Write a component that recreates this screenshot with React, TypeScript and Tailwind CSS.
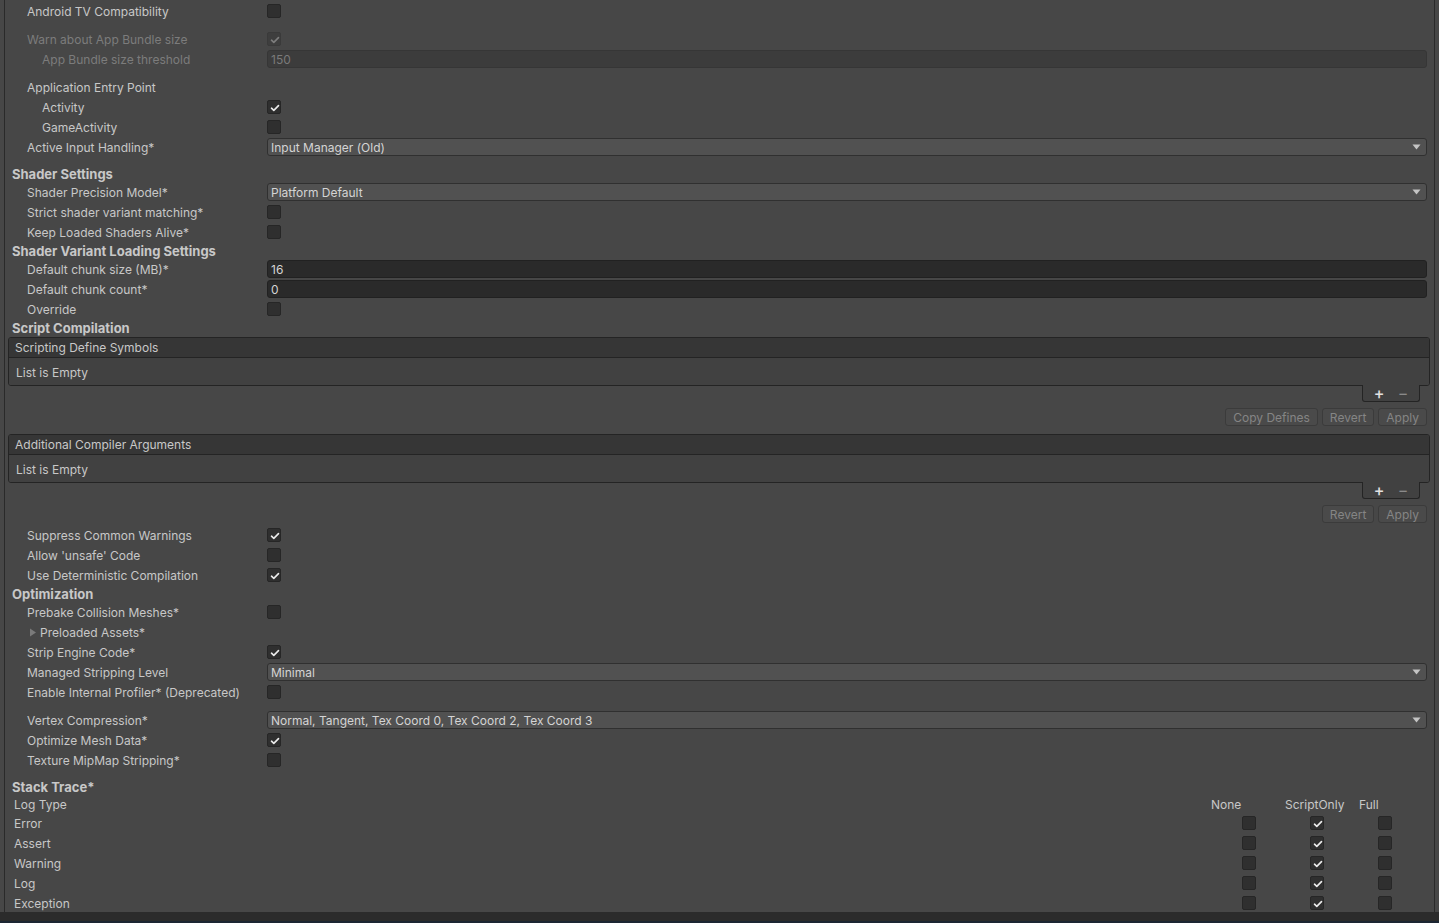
import React from 'react';

type Indent = 0 | 1 | 2;

const indentClass: Record<Indent, string> = {
  0: 'pl-[7px]',
  1: 'pl-[22px]',
  2: 'pl-[37px]',
};

const Check: React.FC<{ dim?: boolean }> = ({ dim }) => (
  <svg width="14" height="14" viewBox="0 0 14 14" className="block">
    <polyline
      points="3.5,7.2 5.8,9.4 10.5,4.6"
      fill="none"
      stroke={dim ? '#7d7d7d' : '#ececec'}
      strokeWidth="1.6"
      strokeLinecap="round"
      strokeLinejoin="round"
    />
  </svg>
);

const Checkbox: React.FC<{ checked?: boolean; disabled?: boolean }> = ({ checked, disabled }) => (
  <div
    className={`w-[14px] h-[14px] rounded-[2px] border shrink-0 ${
      disabled ? 'bg-[#3e3e3e] border-[#3a3a3a]' : 'bg-[#2f2f2f] border-[#262626]'
    }`}
  >
    {checked && <Check dim={disabled} />}
  </div>
);

const Row: React.FC<{
  label: React.ReactNode;
  indent?: Indent;
  disabled?: boolean;
  className?: string;
  children?: React.ReactNode;
}> = ({ label, indent = 1, disabled, className = '', children }) => (
  <div className={`h-[20px] flex items-center ${className}`}>
    <div
      className={`w-[262px] shrink-0 whitespace-nowrap pt-[2px] ${indentClass[indent]} ${
        disabled ? 'text-[#7c7c7c]' : 'text-[#c8c8c8]'
      }`}
    >
      {label}
    </div>
    <div className="flex-1 flex items-center pr-[7px]">{children}</div>
  </div>
);

const Header: React.FC<{ children: React.ReactNode; className?: string }> = ({ children, className = '' }) => (
  <div className={`h-[18px] flex items-center pt-[2px] pl-[7px] font-bold text-[13px] text-[#c8c8c8] ${className}`}>
    {children}
  </div>
);

const Dropdown: React.FC<{ value: string }> = ({ value }) => (
  <div className="flex-1 h-[18px] rounded-[3px] bg-[#515151] border border-[#303030] flex items-center pl-[3px] pr-[5px] text-[#d4d4d4]">
    <span className="flex-1 pt-[2px]">{value}</span>
    <svg width="9" height="6" viewBox="0 0 9 6">
      <polygon points="0.5,0.5 8.5,0.5 4.5,5.5" fill="#c4c4c4" />
    </svg>
  </div>
);

const TextField: React.FC<{ value: string; disabled?: boolean }> = ({ value, disabled }) => (
  <div
    className={`flex-1 h-[18px] rounded-[3px] border flex items-center pt-[2px] pl-[3px] ${
      disabled
        ? 'bg-[#3c3c3c] border-[#363636] text-[#7a7a7a]'
        : 'bg-[#2a2a2a] border-[#212121] text-[#d4d4d4]'
    }`}
  >
    {value}
  </div>
);

const SmallButton: React.FC<{ children: React.ReactNode }> = ({ children }) => (
  <div className="h-[18px] px-[7px] pt-[2px] rounded-[3px] bg-[#4a4a4a] border border-[#3b3b3b] flex items-center text-[#858585]">
    {children}
  </div>
);

const ListBox: React.FC<{ title: string; buttons: string[] }> = ({ title, buttons }) => (
  <div className="pl-[3px] pr-[4px]">
    <div className="rounded-[3px] border border-[#242424] overflow-hidden">
      <div className="h-[20px] bg-[#363636] border-b border-[#242424] flex items-center pl-[6px] text-[#c8c8c8]">
        {title}
      </div>
      <div className="h-[27px] bg-[#414141] flex items-center pt-[2px] pl-[7px] text-[#c8c8c8]">List is Empty</div>
    </div>
    <div className="flex justify-end pr-[10px]">
      <div className="w-[58px] h-[17px] -mt-[1px] bg-[#414141] border border-t-0 border-[#242424] rounded-b-[3px] flex items-center justify-around px-[4px]">
        <span className="text-[#e2e2e2] text-[16px] leading-none font-medium">+</span>
        <span className="text-[#8a8a8a] text-[16px] leading-none">−</span>
      </div>
    </div>
    <div className="flex justify-end gap-[4px] pr-[3px] mt-[6px]">
      {buttons.map((b) => (
        <SmallButton key={b}>{b}</SmallButton>
      ))}
    </div>
  </div>
);

const stackRows = ['Error', 'Assert', 'Warning', 'Log', 'Exception'];

export default function App() {
  return (
    <div
      className="w-full h-[923px] bg-[#474747] overflow-hidden flex flex-col text-[12px] leading-none"
      style={{ fontFamily: 'Inter, "Noto Sans", sans-serif' }}
    >
      <div className="flex-1 mx-[4px] border-l border-r border-[#2a2a2a] pt-[1px] min-h-0">
        <Row label="Android TV Compatibility">
          <Checkbox />
        </Row>
        <Row label="Warn about App Bundle size" disabled className="mt-[8px]">
          <Checkbox checked disabled />
        </Row>
        <Row label="App Bundle size threshold" indent={2} disabled>
          <TextField value="150" disabled />
        </Row>
        <Row label="Application Entry Point" className="mt-[8px]" />
        <Row label="Activity" indent={2}>
          <Checkbox checked />
        </Row>
        <Row label="GameActivity" indent={2}>
          <Checkbox />
        </Row>
        <Row label="Active Input Handling*">
          <Dropdown value="Input Manager (Old)" />
        </Row>

        <Header className="mt-[7px]">Shader Settings</Header>
        <Row label="Shader Precision Model*">
          <Dropdown value="Platform Default" />
        </Row>
        <Row label="Strict shader variant matching*">
          <Checkbox />
        </Row>
        <Row label="Keep Loaded Shaders Alive*">
          <Checkbox />
        </Row>
        <Header className="-mt-[1px]">Shader Variant Loading Settings</Header>
        <Row label="Default chunk size (MB)*">
          <TextField value="16" />
        </Row>
        <Row label="Default chunk count*">
          <TextField value="0" />
        </Row>
        <Row label="Override">
          <Checkbox />
        </Row>
        <Header className="-mt-[1px]">Script Compilation</Header>

        <div className="mt-[1px]">
          <ListBox title="Scripting Define Symbols" buttons={['Copy Defines', 'Revert', 'Apply']} />
        </div>
        <div className="mt-[8px]">
          <ListBox title="Additional Compiler Arguments" buttons={['Revert', 'Apply']} />
        </div>

        <Row label="Suppress Common Warnings" className="mt-[2px]">
          <Checkbox checked />
        </Row>
        <Row label="Allow 'unsafe' Code">
          <Checkbox />
        </Row>
        <Row label="Use Deterministic Compilation">
          <Checkbox checked />
        </Row>
        <Header className="-mt-[1px]">Optimization</Header>
        <Row label="Prebake Collision Meshes*">
          <Checkbox />
        </Row>
        <Row
          label={
            <span className="flex items-center">
              <svg width="8" height="9" viewBox="0 0 8 9" className="ml-[2px] mr-[3px] -mt-[2px]">
                <polygon points="1,0.5 7,4.5 1,8.5" fill="#7a7a7a" />
              </svg>
              Preloaded Assets*
            </span>
          }
        />
        <Row label="Strip Engine Code*">
          <Checkbox checked />
        </Row>
        <Row label="Managed Stripping Level">
          <Dropdown value="Minimal" />
        </Row>
        <Row label="Enable Internal Profiler* (Deprecated)">
          <Checkbox />
        </Row>
        <Row label="Vertex Compression*" className="mt-[8px]">
          <Dropdown value="Normal, Tangent, Tex Coord 0, Tex Coord 2, Tex Coord 3" />
        </Row>
        <Row label="Optimize Mesh Data*">
          <Checkbox checked />
        </Row>
        <Row label="Texture MipMap Stripping*">
          <Checkbox />
        </Row>

        <Header className="mt-[7px]">Stack Trace*</Header>
        <div className="h-[18px] flex items-center pt-[2px] text-[#c8c8c8]">
          <div className="flex-1 pl-[9px]">Log Type</div>
          <div className="w-[74px]">None</div>
          <div className="w-[74px]">ScriptOnly</div>
          <div className="w-[74px]">Full</div>
          <div className="w-[1px]" />
        </div>
        {stackRows.map((r) => (
          <div key={r} className="h-[20px] flex items-center text-[#c8c8c8]">
            <div className="flex-1 pl-[9px] pt-[2px]">{r}</div>
            <div className="w-[68px] flex justify-center">
              <Checkbox />
            </div>
            <div className="w-[68px] flex justify-center">
              <Checkbox checked />
            </div>
            <div className="w-[68px] flex justify-center">
              <Checkbox />
            </div>
            <div className="w-[15px]" />
          </div>
        ))}
      </div>
      <div className="h-[9px] bg-[#2b2b2b] shrink-0" />
      <div className="h-[2px] bg-[#1c2633] shrink-0" />
    </div>
  );
}
